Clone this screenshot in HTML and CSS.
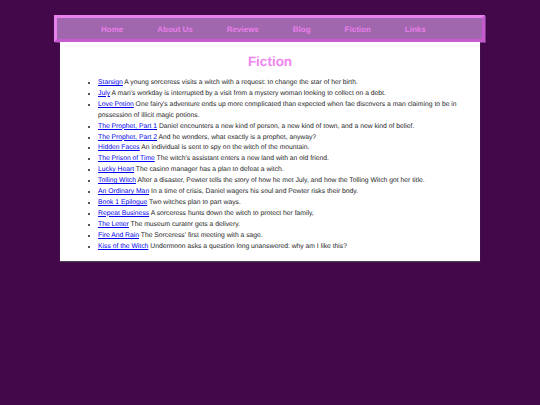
FILE: index.html
```html
<!DOCTYPE html>
<html>
<head>
<meta charset="utf-8">
<title>Fiction</title>
<link rel="stylesheet" href="styles.css">
</head>
<body>
<div class="wrap">
  <nav class="nav">
    <a href="#">Home</a>
    <a href="#">About Us</a>
    <a href="#">Reviews</a>
    <a href="#">Blog</a>
    <a href="#">Fiction</a>
    <a href="#">Links</a>
  </nav>
  <main class="content">
    <h1 class="title">Fiction</h1>
    <ul class="stories">
      <li><a href="#">Starsign</a> A young sorceress visits a witch with a request: to change the star of her birth.</li>
      <li><a href="#">July</a> A man's workday is interrupted by a visit from a mystery woman looking to collect on a debt.</li>
      <li><a href="#">Love Potion</a> One fairy's adventure ends up more complicated than expected when fae discovers a man claiming to be in possession of illicit magic potions.</li>
      <li><a href="#">The Prophet, Part 1</a> Daniel encounters a new kind of person, a new kind of town, and a new kind of belief.</li>
      <li><a href="#">The Prophet, Part 2</a> And he wonders, what exactly is a prophet, anyway?</li>
      <li><a href="#">Hidden Faces</a> An individual is sent to spy on the witch of the mountain.</li>
      <li><a href="#">The Prison of Time</a> The witch's assistant enters a new land with an old friend.</li>
      <li><a href="#">Lucky Heart</a> The casino manager has a plan to defeat a witch.</li>
      <li><a href="#">Tolling Witch</a> After a disaster, Pewter tells the story of how he met July, and how the Tolling Witch got her title.</li>
      <li><a href="#">An Ordinary Man</a> In a time of crisis, Daniel wagers his soul and Pewter risks their body.</li>
      <li><a href="#">Book 1 Epilogue</a> Two witches plan to part ways.</li>
      <li><a href="#">Repeat Business</a> A sorceress hunts down the witch to protect her family,</li>
      <li><a href="#">The Letter</a> The museum curator gets a delivery.</li>
      <li><a href="#">Fire And Rain</a> The Sorceress' first meeting with a sage.</li>
      <li><a href="#">Kiss of the Witch</a> Undermoon asks a question long unanswered: why am I like this?</li>
    </ul>
  </main>
</div>
</body>
</html>
```
FILE: styles.css
```css
html, body {
  margin: 0;
  padding: 0;
}
body {
  background: #42084a;
  font-family: "Liberation Sans", Arial, sans-serif;
  text-rendering: geometricPrecision;
  width: 540px;
  height: 405px;
}
.wrap {
  width: 431px;
  margin: 0 0 0 54px;
  padding-top: 15px;
}
.nav {
  display: flex;
  gap: 34px;
  align-items: center;
  padding-left: 44px;
  padding-top: 1px;
  box-sizing: content-box;
  background: #a066ae;
  border: 3px solid #e680ec;
  border-right-color: #c85ad0;
  border-bottom-color: #c85ad0;
  box-shadow: 1px 1px 0 #7a3a84;
  height: 20px;
}
.nav a {
  color: #e87ee9;
  font-weight: bold;
  font-size: 8px;
  text-decoration: none;
}
.content {
  width: 420px;
  margin-left: 6px;
  background: #ffffff;
  padding: 11px 0 8px 0;
  box-shadow: 0 1px 1px #4a4050;
}
.title {
  margin: 0 0 8px 0;
  text-align: center;
  color: #f184f0;
  font-size: 13.5px;
  line-height: 17px;
  font-weight: bold;
}
.stories {
  margin: 0;
  padding: 0 20px 0 38px;
  font-size: 6.78px;
  line-height: 10.9px;
  color: #1e1e1e;
}
.stories a {
  color: #0000ee;
}
```
